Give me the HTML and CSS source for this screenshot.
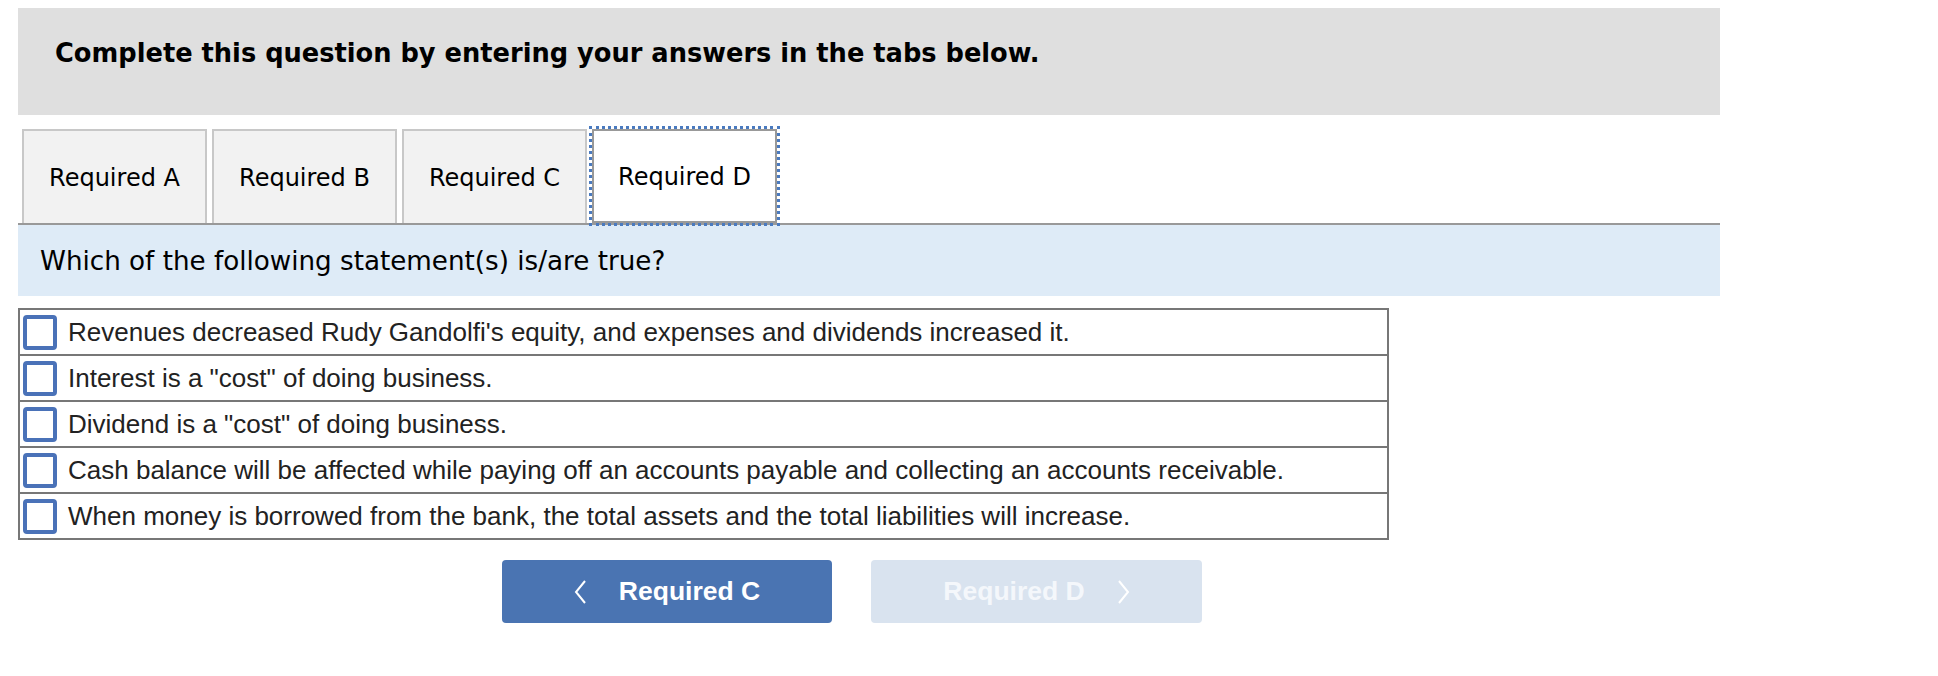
FILE: index.html
```html
<!DOCTYPE html>
<html>
<head>
<meta charset="utf-8">
<link rel="stylesheet" href="styles.css">
</head>
<body>
<div class="page">
  <div class="header">Complete this question by entering your answers in the tabs below.</div>
  <div class="tabs">
    <div class="tab">Required A</div>
    <div class="tab">Required B</div>
    <div class="tab">Required C</div>
    <div class="tab active">Required D</div>
  </div>
  <div class="question">Which of the following statement(s) is/are true?</div>
  <div class="options">
    <div class="row"><span class="box"></span><span class="txt">Revenues decreased Rudy Gandolfi's equity, and expenses and dividends increased it.</span></div>
    <div class="row"><span class="box"></span><span class="txt">Interest is a "cost" of doing business.</span></div>
    <div class="row"><span class="box"></span><span class="txt">Dividend is a "cost" of doing business.</span></div>
    <div class="row"><span class="box"></span><span class="txt">Cash balance will be affected while paying off an accounts payable and collecting an accounts receivable.</span></div>
    <div class="row"><span class="box"></span><span class="txt">When money is borrowed from the bank, the total assets and the total liabilities will increase.</span></div>
  </div>
  <div class="nav">
    <div class="btn prev">
      <svg class="chev" width="13" height="26" viewBox="0 0 13 26"><polyline points="11,2 2,13 11,24" fill="none" stroke="#fff" stroke-width="2"/></svg>
      <span>Required C</span>
    </div>
    <div class="btn next">
      <span>Required D</span>
      <svg class="chev" width="13" height="26" viewBox="0 0 13 26"><polyline points="2,2 11,13 2,24" fill="none" stroke="#fff" stroke-width="2"/></svg>
    </div>
  </div>
</div>
</body>
</html>
```
FILE: styles.css
```css
* { box-sizing: border-box; }
body { margin: 0; background: #fff; }
.page { padding: 8px 0 0 18px; width: 1720px; }
.header {
  height: 107px;
  background: #dfdfdf;
  padding: 29px 0 0 37px;
  font-family: "DejaVu Sans", Verdana, sans-serif;
  font-weight: bold;
  font-size: 25.7px;
  line-height: 32px;
  color: #000;
}
.tabs {
  display: flex;
  gap: 5px;
  padding: 14px 0 0 4px;
  border-bottom: 2px solid #999;
}
.tab {
  width: 185px;
  height: 94px;
  background: #f2f2f2;
  border: 2px solid #c8c8c8;
  border-bottom: none;
  display: flex;
  align-items: center;
  justify-content: center;
  padding-top: 2px;
  font-family: "DejaVu Sans", Verdana, sans-serif;
  font-size: 24px;
  color: #000;
}
.tab.active {
  background: #fff;
  border-color: #999;
  border-bottom: 2px solid #999;
  margin-bottom: -2px;
  outline: 3px dotted #4a7abf;
  outline-offset: 0px;
}
.question {
  height: 71px;
  background: #deebf7;
  padding: 21px 0 0 22px;
  font-family: "DejaVu Sans", Verdana, sans-serif;
  font-size: 26.2px;
  line-height: 30px;
  color: #000;
}
.options {
  margin-top: 12px;
  width: 1371px;
  border: 2px solid #777;
  border-bottom: none;
}
.row {
  height: 46px;
  border-bottom: 2px solid #777;
  display: flex;
  align-items: center;
  padding-left: 3px;
}
.box {
  width: 34px;
  height: 35px;
  border: 4px solid #4a72b8;
  border-radius: 4px;
  background: #fff;
  flex: none;
}
.txt {
  margin-left: 11px;
  font-family: "Liberation Sans", Arial, sans-serif;
  font-size: 26px;
  color: #222;
}
.nav {
  display: flex;
  gap: 39px;
  margin: 20px 0 0 484px;
}
.btn {
  width: 330px;
  height: 63px;
  border-radius: 4px;
  display: flex;
  align-items: center;
  justify-content: center;
  gap: 32px;
  font-family: "Liberation Sans", Arial, sans-serif;
  font-weight: bold;
  font-size: 26.5px;
  color: #fff;
}
.prev { background: #4a74b2; }
.next { background: #d9e3ef; width: 331px; color: #f4f7fb; }
.chev { display: block; }
```
